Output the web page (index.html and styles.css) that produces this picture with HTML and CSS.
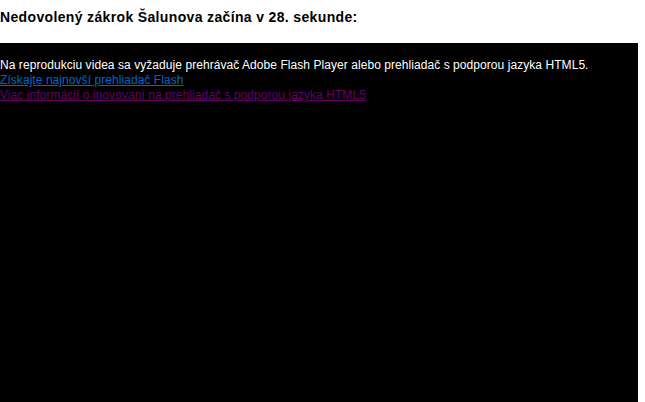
FILE: index.html
```html
<!DOCTYPE html>
<html lang="sk">
<head>
<meta charset="utf-8">
<link rel="stylesheet" href="styles.css">
</head>
<body>
<h3 class="title">Nedovolený zákrok Šalunova začína v 28. sekunde:</h3>
<div class="player">
  <p class="msg">Na reprodukciu videa sa vyžaduje prehrávač Adobe Flash Player alebo prehliadač s podporou jazyka HTML5.<br>
  <a class="link-new" href="#">Získajte najnovší prehliadač Flash</a><br>
  <a class="link-visited" href="#">Viac informácií o inovovaní na prehliadač s podporou jazyka HTML5</a></p>
</div>
</body>
</html>
```
FILE: styles.css
```css
html, body {
  margin: 0;
  padding: 0;
  background: #fff;
  font-family: "Liberation Sans", Arial, sans-serif;
}
.title {
  margin: 0;
  padding: 9px 0 0;
  height: 43px;
  box-sizing: border-box;
  font-size: 14px;
  font-weight: bold;
  color: #000;
  line-height: 17px;
  letter-spacing: 0.35px;
}
.player {
  width: 638px;
  height: 359px;
  background: #000;
  padding-top: 15px;
  box-sizing: border-box;
}
.msg {
  margin: 0;
  color: #fff;
  font-size: 12px;
  line-height: 15px;
  letter-spacing: 0.06px;
}
.link-new {
  color: #0066cc;
}
.link-visited {
  color: #660066;
}
```
